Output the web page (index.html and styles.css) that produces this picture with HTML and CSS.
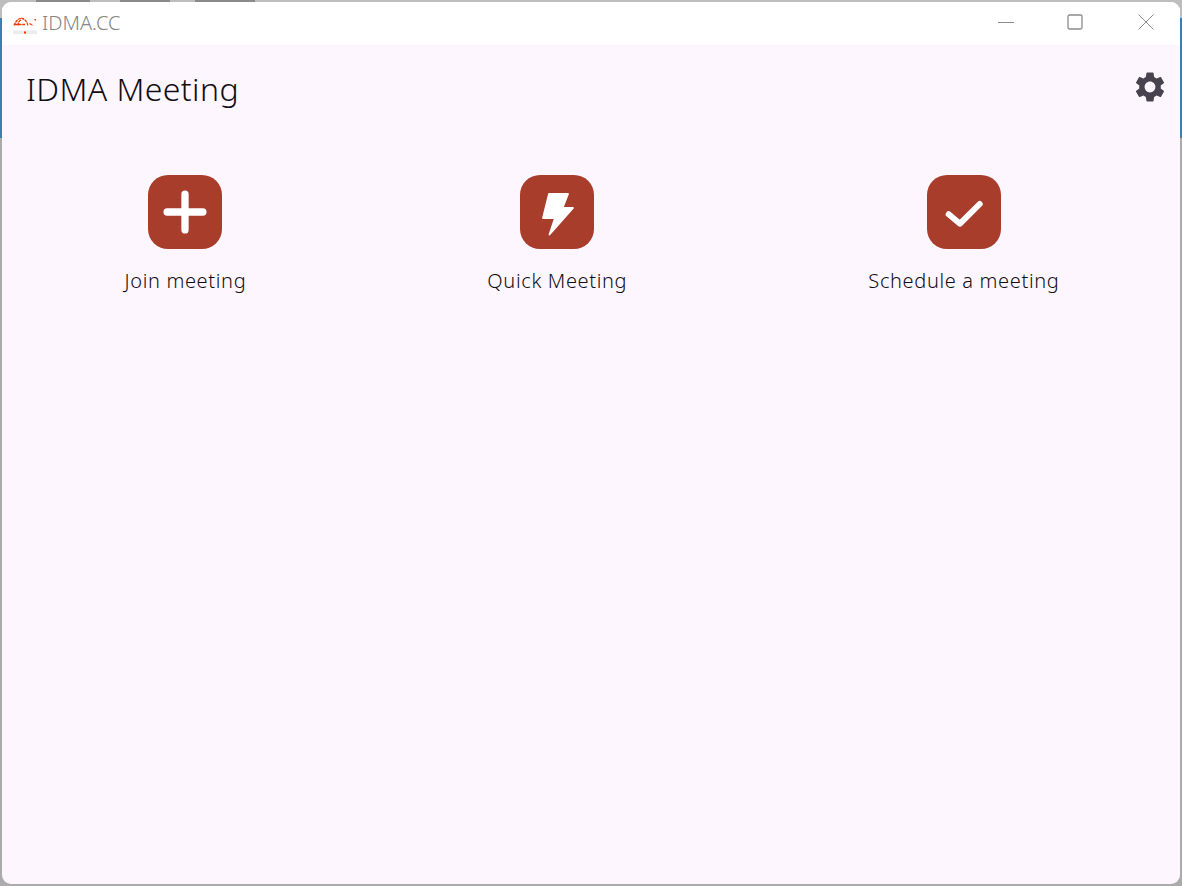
FILE: index.html
```html
<!DOCTYPE html>
<html lang="en">
<head>
<meta charset="utf-8">
<title>IDMA Meeting</title>
<link rel="stylesheet" href="styles.css">
</head>
<body>
<div class="window">
  <div class="titlebar">
    <div class="brand">
      <svg class="logo" width="24" height="24" viewBox="0 0 24 24">
        <rect x="0" y="20.500" width="24" height="4" fill="#ececec"/>
        <rect x="11" y="21.500" width="2" height="2" fill="#f03000"/>
        <path d="M1 15.500C3 10.500 6 8 9 8.500C12 9 14 12 15 15.500M5 15.500C5 12.500 6.500 10 8.500 10M2 14.500L12 14.500M16.500 13.500L20 15.500" fill="none" stroke="#f03a00" stroke-width="1.300" stroke-dasharray="3 0.600"/>
        <rect x="21.500" y="9" width="1.500" height="1.500" fill="#f03a00"/>
      </svg>
      <span class="brand-name">IDMA.CC</span>
    </div>
    <div class="controls">
      <svg width="16" height="16" viewBox="0 0 16 16"><path d="M0 8.500H16" stroke="#8c8c8c" stroke-width="1"/></svg>
      <svg width="16" height="16" viewBox="0 0 16 16"><rect x="1" y="1" width="14" height="14" rx="1.500" fill="none" stroke="#8c8c8c" stroke-width="1.300"/></svg>
      <svg class="close" width="16" height="16" viewBox="0 0 16 16"><path d="M0.500 0.500L15.500 15.500M15.500 0.500L0.500 15.500" stroke="#8c8c8c" stroke-width="1"/></svg>
    </div>
  </div>
  <main class="content">
    <header class="header">
      <h1 class="title">IDMA Meeting</h1>
      <svg class="gear" width="36" height="36" viewBox="0 0 24 24"><path fill="#46434f" d="M19.14 12.94c.04-.3.06-.61.06-.94 0-.32-.02-.64-.07-.94l2.03-1.58a.49.49 0 0 0 .12-.61l-1.92-3.32a.488.488 0 0 0-.59-.22l-2.39.96c-.5-.38-1.03-.7-1.62-.94l-.36-2.54a.484.484 0 0 0-.48-.41h-3.84c-.24 0-.43.17-.47.41l-.36 2.54c-.59.24-1.13.57-1.62.94l-2.39-.96c-.22-.08-.47 0-.59.22L2.74 8.87c-.12.21-.08.47.12.61l2.03 1.58c-.05.3-.09.63-.09.94s.02.64.07.94l-2.03 1.58a.49.49 0 0 0-.12.61l1.92 3.32c.12.22.37.29.59.22l2.39-.96c.5.38 1.03.7 1.62.94l.36 2.54c.05.24.24.41.48.41h3.84c.24 0 .44-.17.47-.41l.36-2.54c.59-.24 1.13-.56 1.62-.94l2.39.96c.22.08.47 0 .59-.22l1.92-3.32c.12-.22.07-.47-.12-.61l-2.01-1.58zM12 15.600c-1.980 0-3.600-1.620-3.600-3.600s1.620-3.600 3.600-3.600 3.600 1.620 3.600 3.600-1.620 3.600-3.600 3.600z"/></svg>
    </header>
    <section class="actions">
      <div class="action">
        <div class="tile">
          <svg width="44" height="44" viewBox="0 0 44 44"><path d="M22 4.100V39.900M4.100 22H39.900" fill="none" stroke="#fff" stroke-width="7.300" stroke-linecap="round"/></svg>
        </div>
        <span class="label">Join meeting</span>
      </div>
      <div class="action">
        <div class="tile">
          <svg width="34" height="48" viewBox="0 0 34 48"><path d="M9 6H28L22.500 20H33L9.500 46.500L15 30H3Z" fill="#fff" stroke="#fff" stroke-width="1.800" stroke-linejoin="round"/></svg>
        </div>
        <span class="label">Quick Meeting</span>
      </div>
      <div class="action">
        <div class="tile">
          <svg width="44" height="36" viewBox="0 0 44 36"><path d="M6.700 20.300L18 29.700L37.700 10" fill="none" stroke="#fff" stroke-width="6" stroke-linecap="round" stroke-linejoin="round"/></svg>
        </div>
        <span class="label">Schedule a meeting</span>
      </div>
    </section>
  </main>
</div>
</body>
</html>
```

FILE: styles.css
```css
* {
  box-sizing: border-box;
}

html,
body {
  height: 100%;
  margin: 0;
}

body {
  padding: 2px;
  overflow: hidden;
  font-family: "Noto Sans", "Open Sans", sans-serif;
  background:
    linear-gradient(#8a8a8a, #8a8a8a) 36px 0 / 54px 2px no-repeat,
    linear-gradient(#8a8a8a, #8a8a8a) 120px 0 / 50px 2px no-repeat,
    linear-gradient(#8a8a8a, #8a8a8a) 195px 0 / 60px 2px no-repeat,
    linear-gradient(#bdbdbd 0 18px, #3a7fb2 18px 138px, #ababab 138px);
}

.window {
  display: flex;
  flex-direction: column;
  height: 100%;
  border-radius: 9px;
  overflow: hidden;
  background: #fef6ff;
}

.titlebar {
  display: flex;
  flex: 0 0 43px;
  align-items: center;
  justify-content: space-between;
  padding: 0 26px 3px 11px;
  background: #fff;
}

.brand {
  display: flex;
  align-items: center;
  gap: 5px;
}

.logo {
  display: block;
}

.brand-name {
  font-size: 20px;
  font-weight: 300;
  color: #858585;
}

.controls {
  display: flex;
  align-items: center;
  gap: 53px;
}

.close {
  margin-left: 2px;
}

.content {
  flex: 1;
}

.header {
  display: flex;
  align-items: center;
  justify-content: space-between;
  height: 86px;
  padding: 0 12px 0 24px;
}

.title {
  margin: 0;
  font-size: 32px;
  font-weight: 300;
  letter-spacing: 0.400px;
  color: #100e13;
}

.gear {
  display: block;
  margin-top: -2px;
}

.actions {
  display: flex;
  justify-content: space-around;
  padding-top: 44px;
  padding-left: 2px;
}

.action {
  display: flex;
  flex-direction: column;
  align-items: center;
}

.tile {
  display: flex;
  align-items: center;
  justify-content: center;
  width: 74px;
  height: 74px;
  border-radius: 20px;
  background: #a93d2c;
}

.label {
  margin-top: 18px;
  font-size: 20px;
  font-weight: 300;
  line-height: 28px;
  letter-spacing: 0.650px;
  color: #100e13;
}
```
